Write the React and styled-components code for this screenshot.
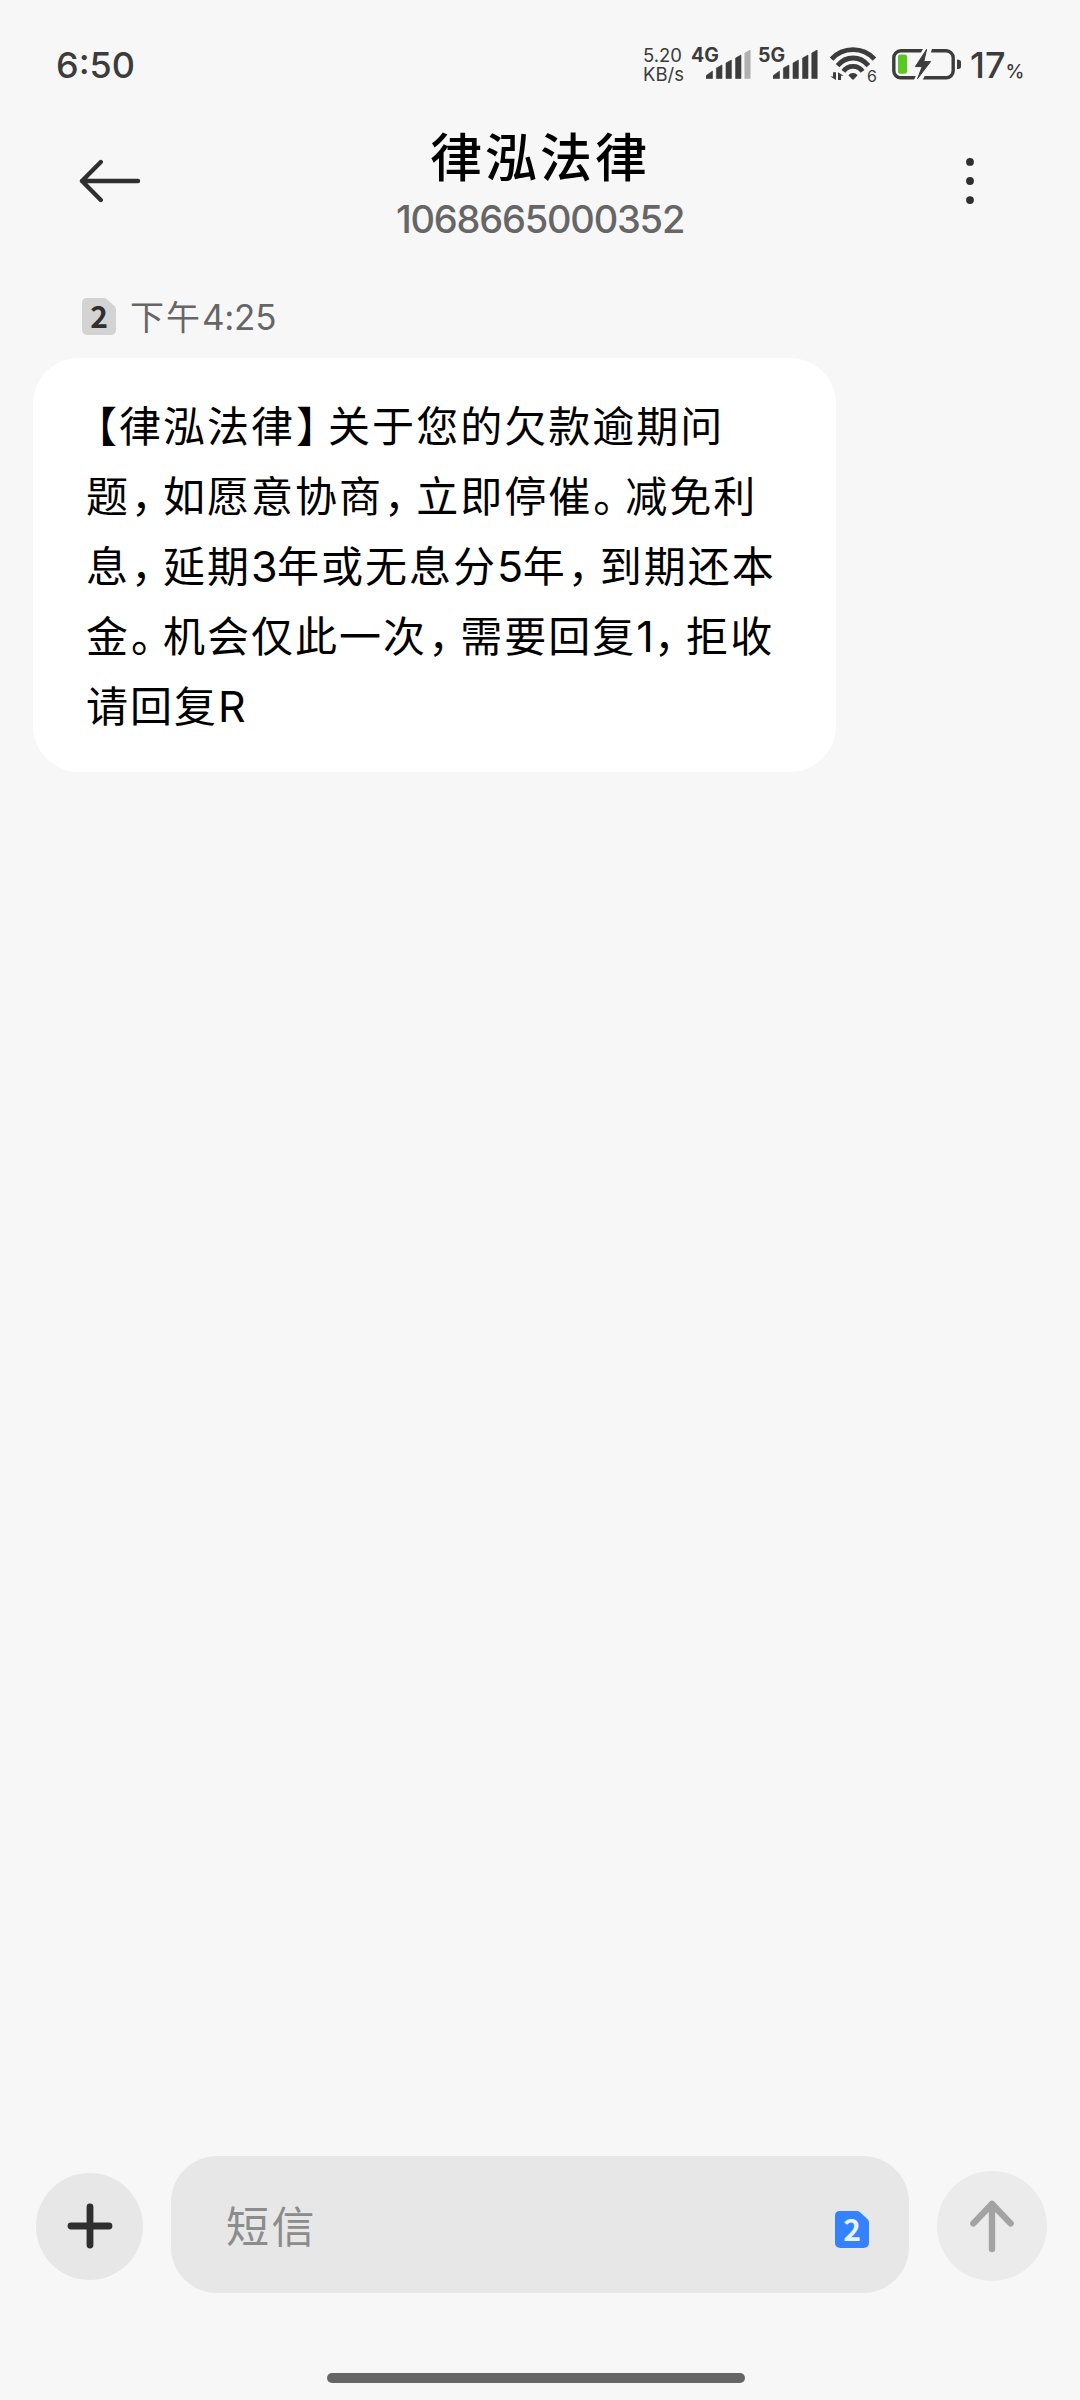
import React from "react";
import styled, {createGlobalStyle} from "styled-components";

const Colors = {
  page: "#f7f7f7",
  status: "#3c3c3c",
  icon: "#2f2f2f",
  muted: "#666666",
  field: "#e7e7e7",
};

const messageLines = [
  "【律泓法律】关于您的欠款逾期问",
  "题，如愿意协商，立即停催。减免利",
  "息，延期3年或无息分5年，到期还本",
  "金。机会仅此一次，需要回复1，拒收",
  "请回复R",
];

const SignalBars = ({label, level}) => {
  const bars = [
    "M0 28.5V26.5Q0 25 2 24.3L6.5 21V28.5Z",
    "M10.4 28.5V18L16 15V28.5Z",
    "M20 28.5V13L25.4 10V28.5Z",
    "M29.6 28.5V8L35 5V28.5Z",
    "M38.8 28.5V3L44.2 0V28.5Z",
  ];
  return <Signal>
    <svg width="45" height="29" viewBox="0 0 45 29">
      {bars.map((d, i) => <path key={d} d={d} stroke={i < level ? Colors.status : "#b0b0b0"}
        fill={i < level ? Colors.status : "#b0b0b0"} strokeWidth="0.6" strokeLinejoin="round"/>)}
    </svg>
    <SignalLabel>{label}</SignalLabel>
  </Signal>
};

const Wifi = () => <WifiBox>
  <svg width="46" height="34" viewBox="0 0 46 34">
    <g fill="none" stroke={Colors.status} strokeWidth="4.8">
      <path d="M1.5 12.2Q10 2.6 23 2.6T44.5 12.2"/>
      <path d="M7.6 18.6Q14 11 23 11T38.4 18.6"/>
      <path d="M13.4 24.4Q17 19.4 23 19.4T32.6 24.4"/>
    </g>
    <path d="M18.4 28.2Q20 26 23 26T27.6 28.2L23.9 32.3Q23 33 22.1 32.3Z" fill={Colors.status}/>
    <path d="M6 25.2V33L0.4 29.6H3V25.2ZM8 33V25.2L13.6 28.8H11V33Z" fill={Colors.status}/>
  </svg>
  <WifiVersion>6</WifiVersion>
</WifiBox>;

const Battery = () => <svg width="70" height="34" viewBox="0 0 70 34">
  <rect x="1.8" y="3.8" width="59.4" height="27" rx="7" fill="none" stroke={Colors.status} strokeWidth="3.4"/>
  <rect x="6" y="7.4" width="9" height="19.4" rx="2.4" fill="#5ac725"/>
  <path d="M32 0H40.5L37 12H42L30 34H21.5L27 21.6H20.5Z" fill={Colors.page}/>
  <path d="M34.6 2.4L23.4 19.6H30.2L25.6 31.6L38.6 14.6H31.8Z" fill={Colors.status} stroke={Colors.status} strokeLinejoin="round"/>
  <path d="M65 12.4Q69 12.4 69 15V19.4Q69 22 65 22Z" fill={Colors.status}/>
</svg>;

const SimBadge = ({active}) => <Sim $active={active}>
  <svg width="34" height="37" viewBox="0 0 34 37">
    <path d="M5 0H21.6Q23.6 0 25 1.2L32.4 8Q34 9.4 34 11.6V31.6Q34 37 28.6 37H5.4Q0 37 0 31.6V5Q0 0 5 0Z"/>
  </svg>
  <SimNumber>2</SimNumber>
</Sim>;

// full-width punctuation is set tighter than a whole cell
const MessageLine = ({text}) => <Line>
  {text.split("").map((c, i) => {
    if (c === "【") return <Mark key={i} $before={10}>{c}</Mark>;
    if (c === "，") return <Mark key={i} $before={1} $after={9}>{c}</Mark>;
    if ("】。".includes(c)) return <Mark key={i} $before={1} $after={9}>{c}</Mark>;
    if (/[0-9A-Z]/.test(c)) return <Latin key={i}>{c}</Latin>;
    return c;
  })}
</Line>;

export default function App() {
  return <Screen>
    <Global/>
    <StatusBar>
      <Clock>6:50</Clock>
      <StatusIcons>
        <Speed>5.20<br/>KB/s</Speed>
        <SignalBars label="4G" level={4}/>
        <SignalBars label="5G" level={5}/>
        <Wifi/>
        <Battery/>
        <Percent>17<small>%</small></Percent>
      </StatusIcons>
    </StatusBar>
    <Header>
      <svg width="62" height="46" viewBox="0 0 62 46" fill="none" stroke={Colors.icon} strokeWidth="4.4" strokeLinecap="round" strokeLinejoin="round">
        <path d="M21.8 4L3 23L21.8 42M3 23H59"/>
      </svg>
      <Titles>
        <Title>律泓法律</Title>
        <Number>1068665000352</Number>
      </Titles>
      <svg width="62" height="46" viewBox="0 0 62 46" fill={Colors.icon}>
        <circle cx="31" cy="3.9" r="3.9"/>
        <circle cx="31" cy="23" r="3.9"/>
        <circle cx="31" cy="42.1" r="3.9"/>
      </svg>
    </Header>
    <Messages>
      <DateRow>
        <SimBadge/>
        <DateText>下午<span>4:25</span></DateText>
      </DateRow>
      <Bubble>
        {messageLines.map(l => <MessageLine key={l} text={l}/>)}
      </Bubble>
    </Messages>
    <Composer>
      <RoundButton $size={107} $color={Colors.field}>
        <svg width="46" height="46" viewBox="0 0 46 46" stroke={Colors.icon} strokeWidth="6.8" strokeLinecap="round">
          <path d="M23 4V42M4 23H42"/>
        </svg>
      </RoundButton>
      <Field>
        <Placeholder>短信</Placeholder>
        <SimBadge active/>
      </Field>
      <RoundButton $size={110} $color="#ebebeb">
        <svg width="46" height="54" viewBox="0 0 46 54" fill="none" stroke="#a3a3a3" strokeWidth="6.4" strokeLinecap="round" strokeLinejoin="round">
          <path d="M23 5V50M4.4 24.4L23 5L41.6 24.4"/>
        </svg>
      </RoundButton>
    </Composer>
    <HomeBar/>
  </Screen>
}

const Global = createGlobalStyle`
  body {
    margin: 0;
    background: ${Colors.page};
  }
  svg {
    display: block;
    flex: none;
  }
`;

const Screen = styled.div`
  width: 1080px;
  height: 2400px;
  display: flex;
  flex-direction: column;
  background: ${Colors.page};
  font-family: "Noto Sans CJK SC", sans-serif;
  box-sizing: border-box;
  padding-bottom: 17px;
`;

const StatusBar = styled.div`
  height: 128px;
  box-sizing: border-box;
  padding: 0 57px 0 56px;
  display: flex;
  justify-content: space-between;
  align-items: center;
  color: ${Colors.status};
  font-family: Inter, sans-serif;
`;

const Clock = styled.div`
  padding-top: 1px;
  font-size: 36px;
  font-weight: 500;
  line-height: 40px;
`;

const StatusIcons = styled.div`
  display: flex;
  align-items: center;
`;

const Speed = styled.div`
  width: 48px;
  padding-top: 1px;
  font-size: 18.5px;
  line-height: 19px;
  white-space: nowrap;
`;

const Signal = styled.div`
  position: relative;
  width: 45px;
  height: 29px;
  margin-left: 15px;
  padding-top: 1px;
  & + & {
    margin-left: 22px;
  }
`;

const SignalLabel = styled.div`
  position: absolute;
  left: -15px;
  top: -4px;
  font-size: 19.5px;
  font-weight: 700;
  line-height: 20px;
`;

const WifiBox = styled.div`
  position: relative;
  margin: 0 16px 0 12px;
`;

const WifiVersion = styled.div`
  position: absolute;
  left: 37px;
  top: 21px;
  font-size: 16px;
  line-height: 16px;
`;

const Percent = styled.div`
  width: 53px;
  margin-left: 8px;
  display: flex;
  align-items: baseline;
  padding-top: 2px;
  font-size: 36px;
  font-weight: 500;
  line-height: 40px;
  white-space: nowrap;
  small {
    font-size: 19px;
    line-height: 20px;
  }
`;

const Header = styled.div`
  height: 128px;
  padding: 0 79px;
  display: flex;
  justify-content: space-between;
  align-items: flex-start;
  > svg {
    margin-top: 30px;
  }
`;

const Titles = styled.div`
  margin-top: -3px;
  display: flex;
  flex-direction: column;
  align-items: center;
`;

const Title = styled.div`
  color: #000;
  font-size: 52px;
  font-weight: 500;
  letter-spacing: 3px;
  line-height: 60px;
`;

const Number = styled.div`
  margin-top: 14px;
  color: ${Colors.muted};
  font-family: Inter, sans-serif;
  font-size: 38px;
  font-weight: 500;
  letter-spacing: -1.2px;
  line-height: 40px;
`;

const Messages = styled.div`
  flex: 1;
  padding: 36px 33px 0;
`;

const DateRow = styled.div`
  height: 48px;
  padding-left: 49px;
  display: flex;
  align-items: center;
`;

const DateText = styled.div`
  margin-left: 14px;
  color: ${Colors.muted};
  font-size: 34px;
  line-height: 46px;
  letter-spacing: 2px;
  span {
    font-family: Inter, sans-serif;
    font-size: 35px;
    letter-spacing: -0.3px;
  }
`;

const Sim = styled.div`
  position: relative;
  fill: ${props => props.$active ? "#3482ff" : "#d3d3d3"};
  color: ${props => props.$active ? "#e8f3ff" : "#2f2f2f"};
`;

const SimNumber = styled.div`
  position: absolute;
  inset: 0;
  text-align: center;
  font-family: "Noto Sans CJK SC", sans-serif;
  font-size: 30px;
  font-weight: 700;
  line-height: 35px;
`;

const Bubble = styled.div`
  width: 803px;
  height: 414px;
  margin-top: 18px;
  box-sizing: border-box;
  padding: 31px 0 0 53px;
  border-radius: 46px;
  background: #fff;
`;

const Line = styled.div`
  height: 70px;
  line-height: 70px;
  color: #000;
  font-size: 42px;
  letter-spacing: 2px;
  white-space: nowrap;
  text-spacing-trim: space-all;
`;

const Mark = styled.span`
  font-feature-settings: "halt";
  padding-left: ${props => props.$before || 0}px;
  padding-right: ${props => props.$after || 0}px;
`;

const Latin = styled.span`
  font-family: Inter, sans-serif;
  font-size: 43px;
  letter-spacing: -0.6px;
`;

const Composer = styled.div`
  height: 137px;
  padding: 0 33px 0 36px;
  display: flex;
  align-items: center;
  justify-content: space-between;
`;

const RoundButton = styled.div`
  width: ${props => props.$size}px;
  height: ${props => props.$size}px;
  margin-top: 3px;
  border-radius: 50%;
  background: ${props => props.$color};
  display: flex;
  align-items: center;
  justify-content: center;
`;

const Field = styled.div`
  width: 738px;
  height: 137px;
  box-sizing: border-box;
  padding: 9px 40px 0 55px;
  border-radius: 46px;
  background: ${Colors.field};
  display: flex;
  align-items: center;
  justify-content: space-between;
`;

const Placeholder = styled.div`
  margin-top: -11px;
  color: #8c8c8c;
  font-size: 43px;
  letter-spacing: 2.4px;
  line-height: 60px;
`;

const HomeBar = styled.div`
  width: 418px;
  height: 10px;
  margin: 80px 0 0 327px;
  border-radius: 5px;
  background: ${Colors.muted};
`;
